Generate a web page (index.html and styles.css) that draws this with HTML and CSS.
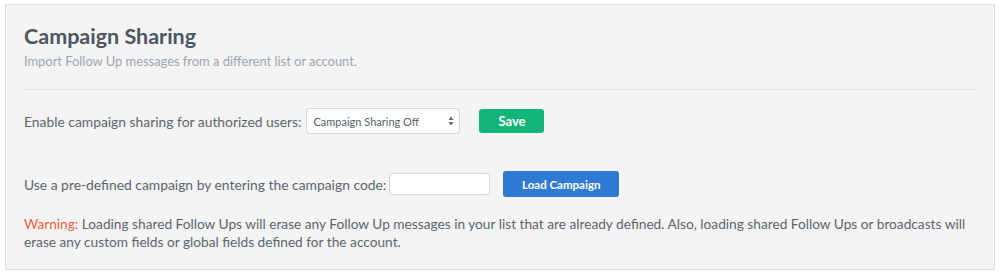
FILE: index.html
```html
<!DOCTYPE html>
<html lang="en">
<head>
  <meta charset="UTF-8" />
  <title>Campaign Sharing</title>
  <link rel="stylesheet" href="styles.css">
</head>
<body>
<div class="panel">
  <h2>Campaign Sharing</h2>
  <p class="subtitle">Import Follow Up messages from a different list or account.</p>
  <hr>
  <div class="row row-share">
    <label for="share">Enable campaign sharing for authorized users:</label>
    <div class="select-wrap">
      <select id="share">
        <option>Campaign Sharing Off</option>
        <option>Campaign Sharing On</option>
      </select>
      <svg class="arrows" width="6" height="10" viewBox="0 0 6 10">
        <path d="M3 0.5 L5.5 4 H0.5 Z M3 9.5 L5.5 6 H0.5 Z" fill="#666"/>
      </svg>
    </div>
    <button class="btn btn-save">Save</button>
  </div>
  <div class="row row-load">
    <label for="code">Use a pre-defined campaign by entering the campaign code:</label>
    <input type="text" id="code">
    <button class="btn btn-load">Load Campaign</button>
  </div>
  <p class="warning"><span class="warn">Warning:</span> Loading shared Follow Ups will erase any Follow Up messages in your list that are already defined. Also, loading shared Follow Ups or broadcasts will erase any custom fields or global fields defined for the account.</p>
</div>
</body>
</html>
```

FILE: styles.css
```css
body {
  margin: 4px 6px 9px 5px;
  background: #fff;
  font-family: Lato, "Noto Sans", sans-serif;
  color: #5b6570;
}

.panel {
  background: #f4f4f4;
  border: 1px solid #dcdcdc;
  padding: 18px 19px 18px 18px;
  height: 266px;
  box-sizing: border-box;
}

h2 {
  margin: 0;
  font-size: 21.5px;
  font-weight: 700;
  color: #4b5661;
  line-height: 26px;
}

.subtitle {
  margin: 4px 0 0;
  font-size: 12.9px;
  color: #9ba7b3;
  line-height: 16px;
}

hr {
  border: none;
  border-top: 1px solid #e3e3e3;
  margin: 20px 0 0;
}

.row {
  display: flex;
  align-items: center;
  font-size: 13.85px;
}

.row-share {
  margin-top: 18px;
}

.row-share label {
  margin-right: 5px;
}

.row-load {
  margin-top: 37px;
}

label {
  margin-right: 3px;
}

.select-wrap {
  position: relative;
  display: flex;
}

select {
  appearance: none;
  width: 154px;
  height: 26px;
  border: 1px solid #d8d8d8;
  border-radius: 4px;
  background: #fff;
  font-family: inherit;
  font-size: 11px;
  color: #555f69;
  padding: 0 6px;
}

.arrows {
  position: absolute;
  right: 6px;
  top: 8px;
  pointer-events: none;
}

input {
  width: 101px;
  height: 22px;
  box-sizing: border-box;
  border: 1px solid #d8d8d8;
  border-radius: 3px;
  background: #fff;
}

.btn {
  border: none;
  border-radius: 3px;
  color: #fff;
  font-family: inherit;
  font-weight: 700;
  cursor: pointer;
}

.btn-save {
  margin-left: 19px;
  width: 65px;
  height: 24px;
  background: #12b579;
  font-size: 13px;
}

.btn-load {
  margin-left: 13px;
  width: 116px;
  height: 26px;
  background: #2f7bd4;
  font-size: 11.5px;
}

.warning {
  margin: 18px 0 0;
  font-size: 13.7px;
  line-height: 18px;
}

.warn {
  color: #f4613a;
}
```
